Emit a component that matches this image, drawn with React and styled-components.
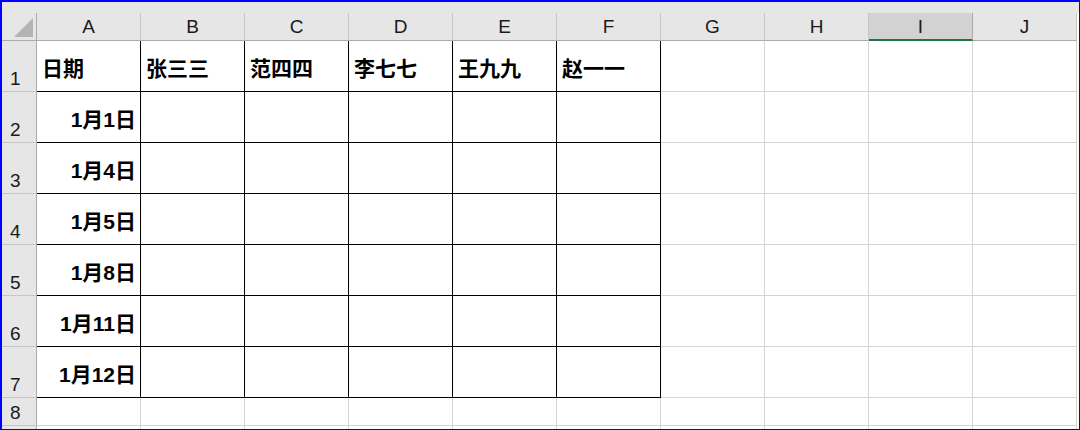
import React from "react";
import styled, { createGlobalStyle } from "styled-components";

const GlobalStyle = createGlobalStyle`
  html, body {
    margin: 0;
    padding: 0;
    background: #ffffff;
  }
  * {
    box-sizing: border-box;
  }
`;

const COLUMNS = ["A", "B", "C", "D", "E", "F", "G", "H", "I", "J"];
const SELECTED_COL = "I";
const HEADERS = ["日期", "张三三", "范四四", "李七七", "王九九", "赵一一"];
const DATES = ["1月1日", "1月4日", "1月5日", "1月8日", "1月11日", "1月12日"];

function App() {
  const rows = [HEADERS, ...DATES.map((d) => [d])];

  return (
    <>
      <GlobalStyle />
      <Frame>
        <TopStrip />
        <Sheet>
          <Corner>
            <svg width="22" height="22" viewBox="0 0 22 22">
              <polygon points="21,2 21,21 2,21" fill="#b4b4b4" />
            </svg>
          </Corner>
          {COLUMNS.map((c) => (
            <ColHead key={c} $selected={c === SELECTED_COL}>
              {c}
            </ColHead>
          ))}

          {rows.map((row, r) => (
            <React.Fragment key={r}>
              <RowHead $height={51}>{r + 1}</RowHead>
              {COLUMNS.map((c, ci) => (
                <Cell
                  key={c}
                  $height={51}
                  $boxed={ci < 6}
                  $right={r > 0 && ci === 0}
                >
                  {row[ci] || ""}
                </Cell>
              ))}
            </React.Fragment>
          ))}

          <RowHead $height={28}>8</RowHead>
          {COLUMNS.map((c) => (
            <Cell key={c} $height={28} />
          ))}
          {/* row 9 only peeks out under the frame edge */}
          <RowHead $height={28} />
          {COLUMNS.map((c) => (
            <Cell key={c} $height={28} />
          ))}
        </Sheet>
      </Frame>
    </>
  );
}

const Frame = styled.div`
  width: 1080px;
  height: 430px;
  border: 2px solid #0000ff;
  border-right-width: 1px;
  border-bottom-width: 1px;
  overflow: hidden;
  background: #ffffff;
  display: flex;
  flex-direction: column;
`;

const TopStrip = styled.div`
  height: 11px;
  flex: none;
  background: #e6e6e6;
`;

const Sheet = styled.div`
  display: grid;
  grid-template-columns: 35px repeat(10, 104px);
  align-content: start;
  font-family: "Liberation Sans", "Noto Sans CJK SC", sans-serif;
`;

const Corner = styled.div`
  height: 28px;
  background: #e6e6e6;
  border-right: 1px solid #ababab;
  border-bottom: 1px solid #ababab;
  display: flex;
  align-items: flex-end;
  justify-content: flex-end;
  padding: 0 2px 2px 0;
`;

const ColHead = styled.div`
  height: 28px;
  background: ${(p) => (p.$selected ? "#d2d2d2" : "#e6e6e6")};
  border-right: 1px solid ${(p) => (p.$selected ? "#ababab" : "#c6c6c6")};
  border-bottom: ${(p) => (p.$selected ? "2px solid #217346" : "1px solid #ababab")};
  display: flex;
  align-items: center;
  justify-content: center;
  padding-top: 1px;
  font-size: 19px;
  color: #1a1a1a;
`;

const RowHead = styled.div`
  height: ${(p) => p.$height}px;
  background: #e6e6e6;
  border-right: 1px solid #ababab;
  border-bottom: 1px solid #c6c6c6;
  display: flex;
  align-items: flex-end;
  padding: 0 0 1px 8px;
  font-size: 19px;
  line-height: 22px;
  color: #1a1a1a;
`;

const Cell = styled.div`
  height: ${(p) => p.$height}px;
  border-right: 1px solid ${(p) => (p.$boxed ? "#000000" : "#d4d4d4")};
  border-bottom: 1px solid ${(p) => (p.$boxed ? "#000000" : "#d4d4d4")};
  display: flex;
  align-items: center;
  justify-content: ${(p) => (p.$right ? "flex-end" : "flex-start")};
  padding: 1px 4px 0 5px;
  font-size: 21px;
  font-weight: 700;
  color: #000000;
  white-space: nowrap;
`;

export default App;
